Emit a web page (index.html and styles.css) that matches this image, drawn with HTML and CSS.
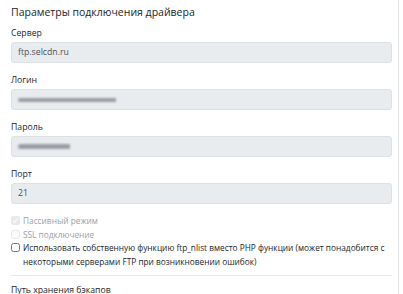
FILE: index.html
```html
<!DOCTYPE html>
<html lang="ru">
<head>
    <meta charset="UTF-8">
    <title>Параметры подключения драйвера</title>
    <link rel="stylesheet" href="styles.css">
</head>
<body>
    <div class="panel">
        <h4 class="title">Параметры подключения драйвера</h4>

        <div class="form-group">
            <label class="label">Сервер</label>
            <div class="input">ftp.selcdn.ru</div>
        </div>

        <div class="form-group">
            <label class="label">Логин</label>
            <div class="input"><span class="smudge smudge-login"></span></div>
        </div>

        <div class="form-group">
            <label class="label">Пароль</label>
            <div class="input"><span class="smudge smudge-pass"></span></div>
        </div>

        <div class="form-group">
            <label class="label">Порт</label>
            <div class="input">21</div>
        </div>

        <div class="checks">
            <label class="check disabled">
                <input type="checkbox" checked disabled>
                <span>Пассивный режим</span>
            </label>
            <label class="check disabled">
                <input type="checkbox" disabled>
                <span>SSL подключение</span>
            </label>
            <label class="check">
                <input type="checkbox">
                <span>Использовать собственную функцию ftp_nlist вместо PHP функции (может понадобится с некоторыми серверами FTP при возникновении ошибок)</span>
            </label>
        </div>

        <hr class="divider">

        <label class="label">Путь хранения бэкапов</label>
    </div>
</body>
</html>
```

FILE: styles.css
```css
body {
    margin: 0;
    background: #fff;
    font-family: "Open Sans", "Noto Sans", sans-serif;
    color: #212529;
    overflow: hidden;
}

.panel {
    width: 381px;
    height: 320px;
    padding: 3px 6px 0 11px;
    border-right: 1px solid #e3e6e9;
}

.title {
    margin: 0 0 5px;
    font-size: 10.5px;
    font-weight: 400;
    line-height: 18px;
    color: #212529;
}

.form-group {
    margin-bottom: 10px;
}

.label {
    display: block;
    font-size: 8.7px;
    line-height: 14px;
    margin-bottom: 2px;
}

.input {
    height: 21px;
    box-sizing: border-box;
    background: #e9ecef;
    border: 1px solid #dde1e5;
    border-radius: 3px;
    padding: 0 6px;
    font-size: 8.7px;
    line-height: 19px;
    color: #495057;
}

.smudge {
    display: inline-block;
    vertical-align: middle;
    height: 4px;
    background: #9a9ea3;
    border-radius: 3px 1px 1px 3px;
    filter: blur(1.3px);
}

.smudge-login {
    width: 98px;
}

.smudge-pass {
    width: 52px;
    height: 5px;
}

.checks {
    margin-top: 2px;
}

.check {
    display: flex;
    align-items: flex-start;
    font-size: 8.3px;
    line-height: 13.5px;
}

.check input {
    width: 9px;
    height: 9px;
    margin: 2px 3px 0 0;
    flex-shrink: 0;
}

.check.disabled {
    color: #9aa0a6;
}

.check.disabled input {
    opacity: 0.5;
}

.divider {
    border: 0;
    border-top: 1px solid #e6e8eb;
    margin: 7px 0 7px;
}
```
